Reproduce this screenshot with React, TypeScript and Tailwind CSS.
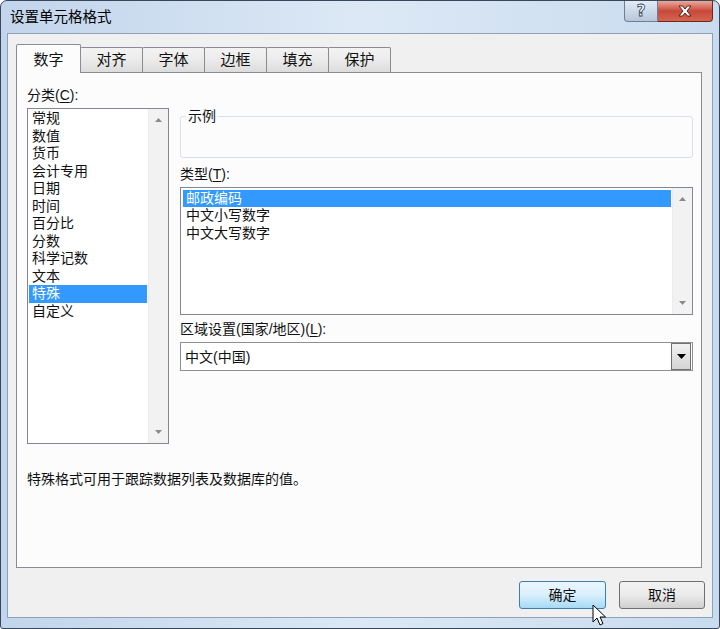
import React from 'react';

const categories = [
  '常规',
  '数值',
  '货币',
  '会计专用',
  '日期',
  '时间',
  '百分比',
  '分数',
  '科学记数',
  '文本',
  '特殊',
  '自定义',
];

const types = ['邮政编码', '中文小写数字', '中文大写数字'];

const tabs = ['数字', '对齐', '字体', '边框', '填充', '保护'];

function ArrowUp() {
  return (
    <svg width="7" height="4" viewBox="0 0 7 4">
      <path d="M0 4 L3.5 0 L7 4 Z" fill="#8a8a8a" />
    </svg>
  );
}

function ArrowDown() {
  return (
    <svg width="7" height="4" viewBox="0 0 7 4">
      <path d="M0 0 L3.5 4 L7 0 Z" fill="#8a8a8a" />
    </svg>
  );
}

function ScrollBar() {
  return (
    <div className="w-[20px] h-full flex flex-col justify-between items-center bg-[#f2f2f2] border-l border-[#ececec] py-[9px]">
      <ArrowUp />
      <ArrowDown />
    </div>
  );
}

function Cursor() {
  return (
    <svg width="15" height="24" viewBox="0 0 15 24" className="absolute left-[592px] top-[604px]">
      <path
        d="M1 1 L1 18 L5 14 L8 21 L11 19.5 L8 13 L13.5 13 Z"
        fill="#ffffff"
        stroke="#000000"
        strokeWidth="1"
        strokeLinejoin="round"
      />
    </svg>
  );
}

export default function App() {
  return (
    <div
      className="relative w-[720px] h-[629px] overflow-hidden bg-white text-[14px] text-[#111]"
      style={{ fontFamily: '"Liberation Sans", "Noto Sans CJK SC", sans-serif' }}
    >
      <div className="h-full flex flex-col rounded-t-[7px] rounded-b-[3px] border border-[#39475a] bg-gradient-to-r from-[#c2d5ec] via-[#dce8f5] to-[#c9dbef]">
        {/* title bar */}
        <div className="h-[32px] flex justify-between items-start">
          <div className="pl-[9px] pt-[6px] text-[14.5px] leading-[20px] text-black">设置单元格格式</div>
          <div className="flex mr-[6px]">
            <div className="w-[34px] h-[21px] flex items-center justify-center rounded-bl-[4px] border border-t-0 border-[#6b7f99] bg-gradient-to-b from-[#e4ecf6] via-[#cdd9e8] to-[#b7c7db]">
              <span
                className="text-[15px] leading-[15px] font-bold text-white"
                style={{ fontFamily: '"DejaVu Sans", sans-serif', WebkitTextStroke: '0.8px #2e3f57' }}
              >
                ?
              </span>
            </div>
            <div className="w-[55px] h-[21px] flex items-center justify-center rounded-br-[4px] border border-t-0 border-l-0 border-[#6e2620] bg-gradient-to-b from-[#e9a99c] via-[#c8483a] to-[#d5654f]">
              <svg width="14" height="12" viewBox="0 0 14 12">
                <path
                  d="M1 1 H4.5 L7 4 L9.5 1 H13 L9 6 L13 11 H9.5 L7 8 L4.5 11 H1 L5 6 Z"
                  fill="#ffffff"
                  stroke="#4b1510"
                  strokeWidth="0.9"
                  strokeLinejoin="round"
                />
              </svg>
            </div>
          </div>
        </div>

        {/* client area */}
        <div className="flex-1 mx-[6px] mb-[10px] border border-[#8ea1b7] bg-[#f0f0f0] flex flex-col">
          {/* tabs */}
          <div className="h-[38px] pl-[8px] flex items-end">
            {tabs.map((t, i) =>
              i === 0 ? (
                <div
                  key={t}
                  className="relative z-10 w-[65px] h-[29px] -mb-px flex items-start justify-center pt-[5px] border border-b-0 border-[#898c95] bg-[#fcfcfd] text-[15px] leading-[20px] rounded-t-[2px]"
                >
                  {t}
                </div>
              ) : (
                <div
                  key={t}
                  className="w-[63px] h-[25px] -ml-px flex items-center justify-center border border-b-0 border-[#898c95] bg-gradient-to-b from-[#f3f3f3] via-[#ebebeb] to-[#dcdcdc] text-[15px] leading-[20px] rounded-t-[2px]"
                >
                  {t}
                </div>
              )
            )}
          </div>

          {/* panel */}
          <div className="ml-[8px] w-[686px] h-[496px] border border-[#898c95] bg-[#fcfcfd] pt-[11px] pl-[10px]">
            <div className="flex gap-[11px]">
              {/* left column */}
              <div className="w-[142px] flex flex-col">
                <div className="h-[22px] leading-[22px]">
                  分类(<span className="underline underline-offset-2">C</span>):
                </div>
                <div className="mt-[2px] h-[336px] border border-[#828790] bg-white flex">
                  <div className="flex-1 p-px">
                    {categories.map((c) => (
                      <div
                        key={c}
                        className={
                          c === '特殊'
                            ? 'h-[17.5px] leading-[17.5px] pl-[3px] bg-[#3399ff] text-white'
                            : 'h-[17.5px] leading-[17.5px] pl-[3px]'
                        }
                      >
                        {c}
                      </div>
                    ))}
                  </div>
                  <ScrollBar />
                </div>
              </div>

              {/* right column */}
              <div className="w-[513px] mt-[24px] flex flex-col">
                <fieldset className="h-[50px] border border-[#d9e0e7] rounded-[3px]">
                  <legend className="ml-[5px] px-[2px] leading-[16px]">示例</legend>
                </fieldset>
                <div className="mt-[6px] h-[20px] leading-[20px]">
                  类型(<span className="underline underline-offset-2">T</span>):
                </div>
                <div className="mt-[3px] h-[128px] border border-[#828790] bg-white flex">
                  <div className="flex-1 pt-[2px] pl-[2px] pr-px">
                    {types.map((t, i) => (
                      <div
                        key={t}
                        className={
                          i === 0
                            ? 'h-[17px] leading-[17px] pl-[3px] bg-[#3399ff] text-white'
                            : 'h-[17.5px] leading-[17.5px] pl-[3px]'
                        }
                      >
                        {t}
                      </div>
                    ))}
                  </div>
                  <ScrollBar />
                </div>
                <div className="mt-[4px] h-[20px] leading-[20px]">
                  区域设置(国家/地区)(<span className="underline underline-offset-2">L</span>):
                </div>
                <div className="mt-[3px] h-[29px] border border-[#8e8f8f] bg-white flex items-center">
                  <div className="flex-1 pl-[4px] leading-[20px]">中文(中国)</div>
                  <div className="w-[20px] h-[27px] mr-px border border-[#707070] bg-gradient-to-b from-[#f2f2f2] to-[#d4d4d4] flex items-center justify-center">
                    <svg width="9" height="5" viewBox="0 0 9 5">
                      <path d="M0 0 L4.5 5 L9 0 Z" fill="#000" />
                    </svg>
                  </div>
                </div>
              </div>
            </div>

            <div className="mt-[25px] h-[20px] leading-[20px]">特殊格式可用于跟踪数据列表及数据库的值。</div>
          </div>

          {/* buttons */}
          <div className="mt-[13px] flex justify-end gap-[13px] pr-[7px]">
            <button className="w-[87px] h-[28px] rounded-[3px] border border-[#3c7fb1] bg-gradient-to-b from-[#eaf6fd] via-[#d9f0fc] to-[#a7d9f5] leading-[20px]">
              确定
            </button>
            <button className="w-[86px] h-[28px] rounded-[3px] border border-[#707070] bg-gradient-to-b from-[#f2f2f2] via-[#ebebeb] to-[#cfcfcf] leading-[20px]">
              取消
            </button>
          </div>
        </div>
      </div>
      <Cursor />
    </div>
  );
}
